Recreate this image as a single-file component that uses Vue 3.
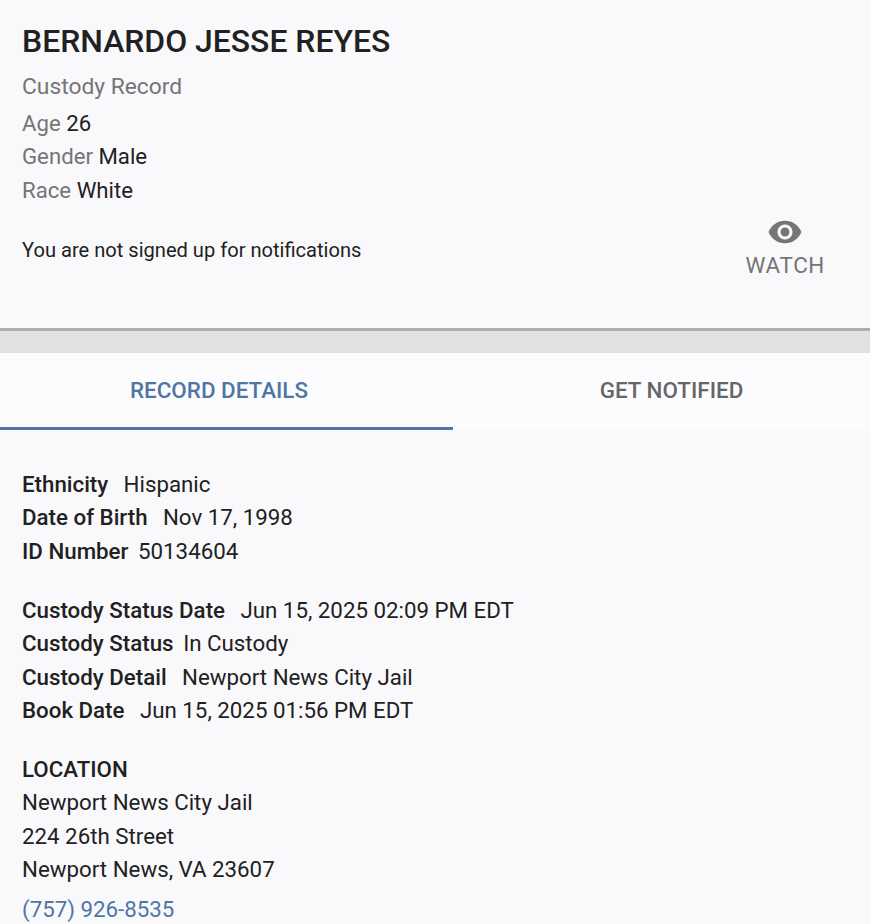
<script setup>
import { ref } from 'vue';

const activeTab = ref('details');

const personRows = [
  { label: 'Age', value: '26' },
  { label: 'Gender', value: 'Male' },
  { label: 'Race', value: 'White' },
];

const identityRows = [
  { label: 'Ethnicity', value: 'Hispanic', gap: 'wide' },
  { label: 'Date of Birth', value: 'Nov 17, 1998', gap: 'wide' },
  { label: 'ID Number', value: '50134604', gap: 'narrow' },
];

const custodyRows = [
  { label: 'Custody Status Date', value: 'Jun 15, 2025 02:09 PM EDT', gap: 'wide' },
  { label: 'Custody Status', value: 'In Custody', gap: 'narrow' },
  { label: 'Custody Detail', value: 'Newport News City Jail', gap: 'wide' },
  { label: 'Book Date', value: 'Jun 15, 2025 01:56 PM EDT', gap: 'wide' },
];

const addressLines = ['Newport News City Jail', '224 26th Street', 'Newport News, VA 23607'];
</script>

<template>
  <div class="page">
    <section class="summary">
      <h1>BERNARDO JESSE REYES</h1>
      <div class="record-type">Custody Record</div>
      <div v-for="row in personRows" :key="row.label" class="person-row">
        <span class="person-label">{{ row.label }}</span> {{ row.value }}
      </div>
      <div class="notify-row">
        <p>You are not signed up for notifications</p>
        <button class="watch">
          <svg width="36" height="36" viewBox="0 0 24 24" fill="#757575">
            <path d="M12 4.5C7 4.5 2.73 7.61 1 12c1.73 4.39 6 7.5 11 7.5s9.27-3.11 11-7.5c-1.73-4.39-6-7.5-11-7.5zM12 17c-2.76 0-5-2.24-5-5s2.24-5 5-5 5 2.24 5 5-2.24 5-5 5zm0-8c-1.66 0-3 1.34-3 3s1.34 3 3 3 3-1.34 3-3-1.34-3-3-3z" />
          </svg>
          <span>WATCH</span>
        </button>
      </div>
    </section>

    <div class="divider"></div>

    <nav class="tabs">
      <button :class="['tab', { active: activeTab === 'details' }]" @click="activeTab = 'details'">RECORD DETAILS</button>
      <button :class="['tab', { active: activeTab === 'notify' }]" @click="activeTab = 'notify'">GET NOTIFIED</button>
    </nav>

    <section class="details">
      <div class="group">
        <div v-for="row in identityRows" :key="row.label" class="detail-row">
          <b :class="row.gap">{{ row.label }}</b>{{ row.value }}
        </div>
      </div>
      <div class="group">
        <div v-for="row in custodyRows" :key="row.label" class="detail-row">
          <b :class="row.gap">{{ row.label }}</b>{{ row.value }}
        </div>
      </div>
      <div class="group">
        <div class="detail-row"><b>LOCATION</b></div>
        <div v-for="line in addressLines" :key="line" class="detail-row">{{ line }}</div>
        <a class="phone" href="#">(757) 926-8535</a>
      </div>
    </section>
  </div>
</template>

<style scoped>
.page {
  width: 870px;
  height: 924px;
  overflow: hidden;
  background: #f9f9fc;
  color: #212121;
  font-family: Roboto, "Liberation Sans", sans-serif;
}

.summary {
  height: 331px;
  box-sizing: border-box;
  padding: 22px 22px 0;
  border-bottom: 3px solid #aeaeae;
}

h1 {
  margin: 0 0 10px;
  font-size: 31.9px;
  line-height: 38px;
  font-weight: 500;
}

.record-type {
  margin-bottom: 4px;
  font-size: 22.8px;
  line-height: 33px;
  color: #757575;
}

.person-row {
  font-size: 22.2px;
  line-height: 33.4px;
}

.person-label {
  color: #757575;
}

.notify-row {
  display: flex;
  justify-content: space-between;
  align-items: flex-start;
  margin-top: 7px;
  padding-right: 23px;
}

.notify-row p {
  margin: 22px 0 0;
  font-size: 20.1px;
  line-height: 28px;
}

.watch {
  display: flex;
  flex-direction: column;
  align-items: center;
  padding: 0;
  border: 0;
  background: none;
  color: #757575;
  font: inherit;
  font-size: 22.4px;
  letter-spacing: 0.65px;
}

.watch span {
  margin-top: 2px;
}

.divider {
  height: 22px;
  background: #e1e1e1;
}

.tabs {
  display: flex;
  height: 77px;
  background: #fcfcff;
}

.tab {
  flex: 0 0 453px;
  padding: 0 15px 0 0;
  border: 0;
  border-bottom: 3px solid transparent;
  background: none;
  color: #666;
  font: inherit;
  font-size: 22.4px;
  font-weight: 500;
}

.tab + .tab {
  flex: 0 0 437px;
  padding: 0;
}

.tab.active {
  color: #4f76a5;
  border-bottom-color: #4f76a5;
}

.details {
  padding: 38px 22px 0;
}

.group {
  margin-bottom: 25.5px;
}

.detail-row {
  font-size: 22.3px;
  line-height: 33.4px;
}

.detail-row b {
  font-weight: 500;
}

b.wide {
  margin-right: 15.4px;
}

b.narrow {
  margin-right: 9.6px;
}

.phone {
  display: block;
  margin-top: 7px;
  font-size: 22.3px;
  line-height: 33.4px;
  color: #4f76a5;
  text-decoration: none;
}
</style>
